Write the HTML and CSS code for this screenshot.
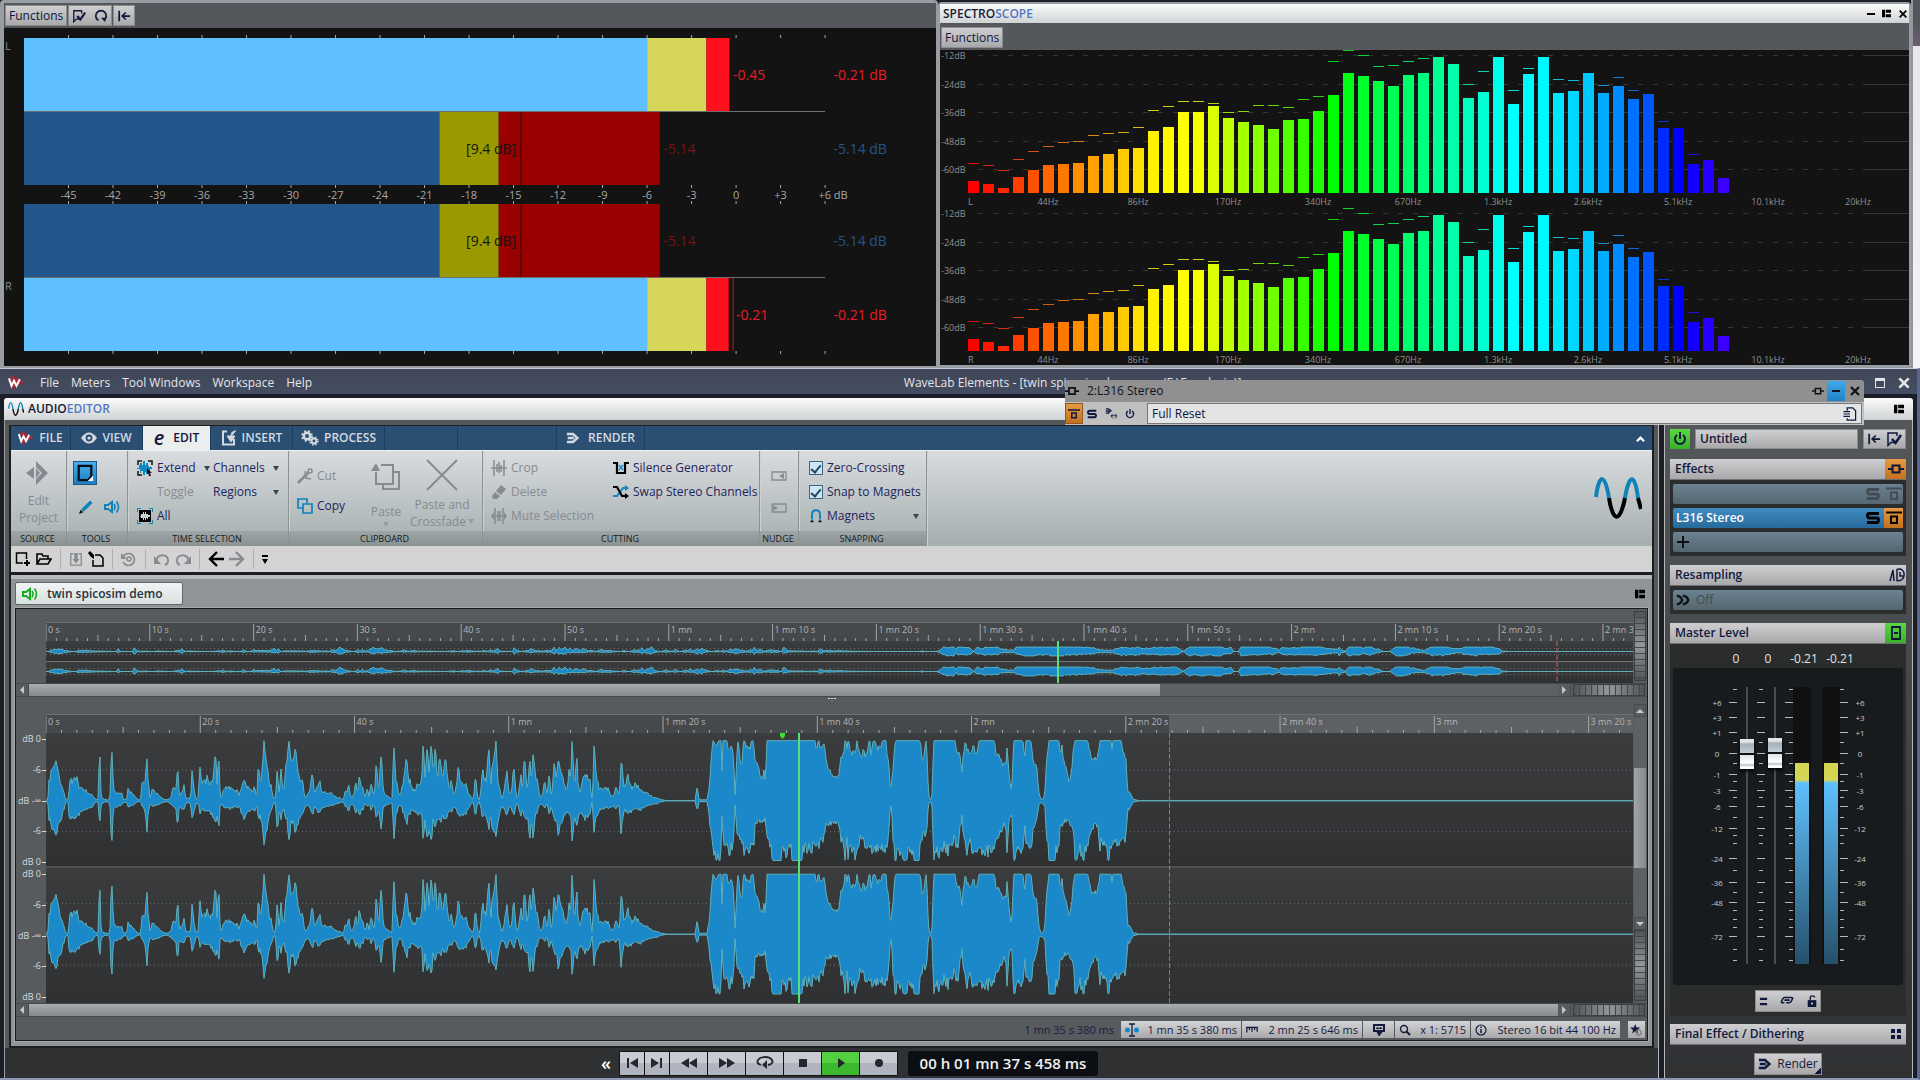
FILE: index.html
```html
<!DOCTYPE html>
<html lang="en">
<head>
    <meta charset="UTF-8">
    <meta name="viewport" content="width=device-width, initial-scale=1.0">
    <title>WaveLab Elements</title>
    <link rel="stylesheet" href="styles.css">
</head>
<body>
    <svg class="symbols" aria-hidden="true">
        <symbol id="check" viewBox="0 0 16 16"><path d="M8 11.500H5l-3 3V2h9v3" fill="none" stroke="currentColor" stroke-width="1.500"/><path d="M6 8l3.500 4L15 4" fill="none" stroke="currentColor" stroke-width="2.500"/></symbol>
        <symbol id="cycle" viewBox="0 0 16 16"><path d="M5 13A6 6 0 1 1 11 13" fill="none" stroke="currentColor" stroke-width="2"/><path d="M8 10h5v5z" fill="currentColor"/></symbol>
        <symbol id="back" viewBox="0 0 16 16"><path d="M2.500 2v12M15 8H6M10 4L6 8l4 4" fill="none" stroke="currentColor" stroke-width="2"/></symbol>
        <symbol id="layout" viewBox="0 0 12 10"><path d="M0 0h4v10H0zM5 0h7v4H5zM5 6h7v4H5z" fill="currentColor"/></symbol>
        <symbol id="cross" viewBox="0 0 12 12"><path d="M2 2l8 8M10 2l-8 8" stroke="currentColor" stroke-width="2.200"/></symbol>
        <symbol id="logo" viewBox="0 0 20 18"><path d="M3 0l16 8L4 18z" fill="#a8283c"/><path d="M1 4l3 9 3-6 3 6 4-8" fill="none" stroke="#fff" stroke-width="2.400"/></symbol>
        <symbol id="sine" viewBox="0 0 48 42"><path d="M2 20C5 -4 11 -4 15 21M31 21C35 -4 41 -4 44 21" fill="none" stroke="#0f82b8" stroke-width="4"/><path d="M15 21C19 46 26 46 31 21M44 21l3 11" fill="none" stroke="#000" stroke-width="4"/></symbol>
        <symbol id="eye" viewBox="0 0 16 12"><path d="M0 6Q8-5 16 6Q8 17 0 6z" fill="currentColor"/><circle cx="8" cy="6" r="3.400" fill="#2a4f73"/><circle cx="8" cy="6" r="1.600" fill="currentColor"/></symbol>
        <symbol id="insert" viewBox="0 0 16 16"><path d="M6 1.500H2v13h11V9" fill="none" stroke="currentColor" stroke-width="2"/><path d="M15 1c-4 0-5 2-5 6M6 6l4 6 4-6z" fill="currentColor" stroke="currentColor"/></symbol>
        <symbol id="gears" viewBox="0 0 18 16"><g fill="none" stroke="currentColor"><circle cx="6" cy="6" r="3.200" stroke-width="2.500"/><circle cx="6" cy="6" r="5" stroke-width="1.600" stroke-dasharray="2 2"/><circle cx="13" cy="11" r="2.400" stroke-width="2"/><circle cx="13" cy="11" r="4" stroke-width="1.400" stroke-dasharray="1.600 1.600"/></g></symbol>
        <symbol id="render" viewBox="0 0 16 14"><path d="M1 2.500h7l5 4.500-5 4.500H1M2 7h7" fill="none" stroke="currentColor" stroke-width="2.800"/></symbol>
        <symbol id="project" viewBox="0 0 28 28"><path d="M11 2l12 12-12 12V20l6-6-6-6zM9 8v12L1 14zM11 9l4 5-4 5z" fill="currentColor"/></symbol>
        <symbol id="range" viewBox="0 0 18 20"><path d="M2 2h14v12l-4 4H2z" fill="none" stroke="#071018" stroke-width="2.500"/><path d="M18 13v6h-6z" fill="#fff"/></symbol>
        <symbol id="pen" viewBox="0 0 18 16"><path d="M15 2L5 12" stroke="#0f82b8" stroke-width="4"/><path d="M1 16l2-5 3 3z" fill="#111"/></symbol>
        <symbol id="speaker" viewBox="0 0 16 14"><path d="M1 5h3l4-3v10L4 9H1z" fill="none" stroke="currentColor" stroke-width="2"/><path d="M10 4q2 3 0 6M12.500 1.500q4 5.500 0 11" fill="none" stroke="currentColor" stroke-width="1.600"/></symbol>
        <symbol id="extend" viewBox="0 0 16 16"><path d="M1 5V1h4M11 1h4v4M5 15H1v-4" fill="none" stroke="#111" stroke-width="1.500"/><path d="M0 8h2V5h1V3h2v2h1V1h2v4h1V3h2v3h1v1h3v2h-2v3h-1v-2h-1v4H9v-2H8v3H6v-4H4v2H3V9H0z" fill="#1188c4"/><path d="M10 8l5 5h-2l1 3h-2l-1-3-1 1z" fill="#111"/></symbol>
        <symbol id="all" viewBox="0 0 16 16"><path d="M0 4V0h4M12 0h4v4M16 12v4h-4M4 16H0v-4" fill="none" stroke="#0f82b8" stroke-width="2"/><path d="M2 2h12v12H2z" fill="#000"/><path d="M3 8h1V6h2V4h1v2h1V4h1v2h2v1h2v2h-2v2h-1v-1H9v2H8v-2H7v2H6v-2H4V9H3z" fill="#ccd2d4"/></symbol>
        <symbol id="cut" viewBox="0 0 16 16"><path d="M1 15L12 4" stroke="currentColor" stroke-width="2.500"/><circle cx="13" cy="3" r="2" fill="none" stroke="currentColor" stroke-width="1.500"/><path d="M8 3l1 7 5 1" fill="none" stroke="currentColor" stroke-width="1.500"/></symbol>
        <symbol id="copy" viewBox="0 0 16 16"><path d="M6 10H1V1h9v4M6 6h9v9H6z" fill="none" stroke="#0f82b8" stroke-width="1.700"/></symbol>
        <symbol id="paste" viewBox="0 0 30 30"><path d="M10 3h12v19H5V10M22 10h6v17H12v-5" fill="none" stroke="currentColor" stroke-width="2"/><path d="M5 1l4 8H0z" fill="currentColor"/></symbol>
        <symbol id="bigcross" viewBox="0 0 32 32"><path d="M1 1l30 30M31 1L1 31" stroke="currentColor" stroke-width="2"/></symbol>
        <symbol id="crop" viewBox="0 0 16 16"><path d="M3 0v16M13 0v16M0 8h16M6 4v8M8 2v11M10 5v7" stroke="currentColor" stroke-width="1.500"/></symbol>
        <symbol id="eraser" viewBox="0 0 16 16"><path d="M10 1l5 4-5 6-5-4zM4 8l5 4-3 3H2l-1-3z" fill="currentColor"/></symbol>
        <symbol id="mute" viewBox="0 0 16 16"><path d="M4 0v16M12 0v16M7 3v10M9 3v10M4 8h8" stroke="currentColor" stroke-width="1.500"/><path d="M0 8l3-4v8zM16 8l-3-4v8z" fill="currentColor"/></symbol>
        <symbol id="silence" viewBox="0 0 16 14"><path d="M0 2h4v10h8V2h4" fill="none" stroke="#000" stroke-width="2.200"/><path d="M6 4l4 5M10 4L6 9" stroke="#1188c4" stroke-width="1.300"/></symbol>
        <symbol id="swap" viewBox="0 0 16 14"><path d="M0 11h4l6-8h3" fill="none" stroke="#1188c4" stroke-width="2"/><path d="M12 0l4 3-4 3z" fill="#1188c4"/><path d="M0 2h4l5 9h4" fill="none" stroke="#000" stroke-width="2.200"/><path d="M12 8l4 3-4 3z" fill="#000"/></symbol>
        <symbol id="nudgel" viewBox="0 0 16 10"><path d="M1 1h14v8H1z" fill="none" stroke="currentColor" stroke-width="1.300"/><path d="M13 2v6L8 5z" fill="currentColor"/></symbol>
        <symbol id="nudger" viewBox="0 0 16 10"><path d="M1 1h14v8H1z" fill="none" stroke="currentColor" stroke-width="1.300"/><path d="M2 2v6l5-3z" fill="currentColor"/></symbol>
        <symbol id="magnet" viewBox="0 0 14 16"><path d="M2.500 12V6c0-6 9-6 9 0v6" fill="none" stroke="#0f82b8" stroke-width="2.200"/><path d="M1 13h3v2H1zM10 13h3v2h-3z" fill="#000"/></symbol>
        <symbol id="new" viewBox="0 0 16 16"><path d="M8 12H1.500V2h10v6" fill="none" stroke="currentColor" stroke-width="1.500"/><path d="M12 9v6M9 12h6" stroke="currentColor" stroke-width="2"/></symbol>
        <symbol id="open" viewBox="0 0 16 14"><path d="M1 12V2h5l1 2h5v3M1 12l3-5h11l-3 5z" fill="none" stroke="currentColor" stroke-width="1.600"/></symbol>
        <symbol id="save" viewBox="0 0 14 16"><path d="M4 2H1v13h12V2h-3" fill="none" stroke="currentColor" stroke-width="1.500"/><path d="M5 1h4v7h2l-4 5-4-5h2z" fill="currentColor"/></symbol>
        <symbol id="saveas" viewBox="0 0 16 16"><path d="M7 4h5l3 3v8H5V9" fill="none" stroke="currentColor" stroke-width="1.500"/><path d="M0 2l2-2 4 4v4L3 6z" fill="currentColor"/></symbol>
        <symbol id="revert" viewBox="0 0 16 16"><path d="M2 6a6 6 0 1 1 0 5" fill="none" stroke="currentColor" stroke-width="1.700"/><path d="M0 2v6h6z" fill="currentColor"/><circle cx="8" cy="8" r="2" fill="none" stroke="currentColor" stroke-width="1.500"/></symbol>
        <symbol id="undo" viewBox="0 0 16 14"><path d="M2 9C4 1 15 2 14 9q0 3-3 4" fill="none" stroke="currentColor" stroke-width="2"/><path d="M0 4v8h7z" fill="currentColor"/></symbol>
        <symbol id="arrow" viewBox="0 0 16 16"><path d="M16 8H2M9 1L2 8l7 7" fill="none" stroke="currentColor" stroke-width="2.400"/></symbol>
        <symbol id="bypass" viewBox="0 0 16 14"><path d="M0 1.500h16M5 5.500h6v6.500H5z" fill="none" stroke="currentColor" stroke-width="2"/></symbol>
        <symbol id="solo" viewBox="0 0 14 13"><path d="M13 2H3Q1.500 2 1.500 4T3 6.500h8q1.500 0 1.500 2T11 11H1" fill="none" stroke="currentColor" stroke-width="3"/></symbol>
        <symbol id="chain" viewBox="0 0 16 10"><path d="M0 5h4M12 5h4M4.500 1.500h7v7h-7z" fill="none" stroke="currentColor" stroke-width="2"/></symbol>
        <symbol id="power" viewBox="0 0 14 14"><path d="M4 3a5 5 0 1 0 6 0M7 0v7" fill="none" stroke="currentColor" stroke-width="1.900"/></symbol>
        <symbol id="route" viewBox="0 0 14 14"><path d="M1 1h3l3 2-3 3H1M1 3.500h4" fill="none" stroke="currentColor" stroke-width="1.500"/><path d="M7 9h7M9 7L7 9l2 3M12 7l2 2-2 3" fill="none" stroke="currentColor"/></symbol>
        <symbol id="sheet" viewBox="0 0 14 15"><path d="M4 4V1h6l3 3v10H4v-2M0 5h7M0 7.500h7M0 10h7" fill="none" stroke="currentColor" stroke-width="1.300"/></symbol>
        <symbol id="clock" viewBox="0 0 16 14"><path d="M1 13L4 2l1 11M8 1.500c10-3 9 13 0 11zM11 4v4h3" fill="none" stroke="currentColor" stroke-width="1.500"/></symbol>
        <symbol id="chevrons" viewBox="0 0 16 12"><path d="M1 1q5 1 6 5-1 4-6 5M8 1q5 1 6 5-1 4-6 5" fill="none" stroke="currentColor" stroke-width="2.600"/></symbol>
        <symbol id="fader" viewBox="0 0 10 14"><path d="M1 1h8v12H1zM3 7h4" fill="none" stroke="currentColor" stroke-width="1.800"/></symbol>
        <symbol id="equal" viewBox="0 0 8 10"><path d="M0 2h8M0 8h8" stroke="currentColor" stroke-width="2.500"/></symbol>
        <symbol id="link" viewBox="0 0 16 12"><path d="M5 8H3Q1 8 2 6l1-2q1-2 2-2h8q2 0 1 2l-1 2q-1 2-3 2H7M5 5h6" fill="none" stroke="currentColor" stroke-width="1.900"/></symbol>
        <symbol id="lock" viewBox="0 0 12 14"><path d="M1 6h10v8H1z" fill="currentColor"/><path d="M4 6V3q0-2 2.500-2T9 3" fill="none" stroke="currentColor" stroke-width="1.500"/><circle cx="6" cy="10" r="1.300" fill="#c4c4c6"/></symbol>
        <symbol id="grid" viewBox="0 0 10 10"><path d="M0 0h4v4H0zM6 0h4v4H6zM0 6h4v4H0zM6 6h4v4H6z" fill="currentColor"/></symbol>
        <symbol id="ibeam" viewBox="0 0 14 14"><circle cx="2.500" cy="7" r="2.500" fill="#1188c4"/><circle cx="11.500" cy="7" r="2.500" fill="#1188c4"/><path d="M4 1h6M4 13h6M7 1v12" stroke="currentColor" stroke-width="1.300"/></symbol>
        <symbol id="rule" viewBox="0 0 14 8"><path d="M0 1h14M1 1v6M4 1v3M7 1v5M10 1v3M13 1v5" stroke="currentColor" stroke-width="1.500"/></symbol>
        <symbol id="monitor" viewBox="0 0 12 12"><path d="M1 1h10v6H1z" fill="none" stroke="currentColor" stroke-width="2"/><path d="M3 5l1.500-2L6 5l1.500-2L9 5M4 8h5l-3 4z" fill="currentColor" stroke="currentColor" stroke-width=".8"/></symbol>
        <symbol id="lens" viewBox="0 0 12 12"><circle cx="5" cy="5" r="3.500" fill="none" stroke="currentColor" stroke-width="1.400"/><path d="M7.500 7.500L11 11" stroke="currentColor" stroke-width="2"/></symbol>
        <symbol id="info" viewBox="0 0 12 12"><circle cx="6" cy="6" r="5" fill="none" stroke="currentColor" stroke-width="1.200"/><path d="M6 2.500v1.500M6 5v4" stroke="currentColor" stroke-width="1.500"/></symbol>
        <symbol id="star" viewBox="0 0 14 14"><path d="M6 0l1.500 4H12L8.500 7l1 4L6 8.500 2.500 11l1-4L0 4h4.500z" fill="currentColor"/><circle cx="10" cy="10" r="3" fill="none" stroke="#777" stroke-width="1.300"/></symbol>
        <symbol id="toend" viewBox="0 0 12 12"><path d="M0 1l8 5-8 5zM9 1h2v10H9z" fill="currentColor"/></symbol>
        <symbol id="forward" viewBox="0 0 16 12"><path d="M0 1l8 5-8 5zM8 1l8 5-8 5z" fill="currentColor"/></symbol>
        <symbol id="loop" viewBox="0 0 18 14"><path d="M5 9Q1 8 1.500 5 3 1 9 1t7.500 4Q17 8 12 9" fill="none" stroke="currentColor" stroke-width="1.800"/><path d="M11 4v9L6 9z" fill="currentColor"/></symbol>
        <symbol id="play" viewBox="0 0 12 12"><path d="M3 1l7 5-7 5z" fill="currentColor"/></symbol>
    </svg>

    <div class="meters">
        <section class="level-window">
            <div class="meter-bar">
                <button class="metal">Functions</button>
                <button class="metal" aria-label="Settings"><svg class="i14"><use href="#check"/></svg><svg class="i14"><use href="#cycle"/></svg></button>
                <button class="metal" aria-label="Reset"><svg class="i14"><use href="#back"/></svg></button>
            </div>
            <svg class="level-plot" id="levels"></svg>
        </section>
        <section class="spectro-window">
            <header class="titlebar">
                <h2>SPECTRO<span>SCOPE</span></h2>
                <div class="title-tools">
                    <button aria-label="Minimize"><i class="dash"></i></button>
                    <button aria-label="Layout"><svg class="i9"><use href="#layout"/></svg></button>
                    <button aria-label="Close"><svg class="i10"><use href="#cross"/></svg></button>
                </div>
            </header>
            <div class="meter-bar tall"><button class="metal">Functions</button></div>
            <svg class="spectro-plot" data-channel="L"></svg>
            <svg class="spectro-plot" data-channel="R"></svg>
        </section>
        <div class="desktop-edge"></div>
    </div>

    <main class="app">
        <div class="menubar">
            <svg class="logo"><use href="#logo"/></svg>
            <nav>
                <a href="#file">File</a>
                <a href="#meters">Meters</a>
                <a href="#tools">Tool Windows</a>
                <a href="#workspace">Workspace</a>
                <a href="#help">Help</a>
            </nav>
            <h1>WaveLab Elements - [twin spicosim demo.wav (F:\F and win)]</h1>
            <button aria-label="Restore"><i class="box"></i></button>
            <button aria-label="Close"><svg class="i14"><use href="#cross"/></svg></button>
        </div>

        <div class="plugin">
            <div class="plugin-title">
                <svg class="i14"><use href="#chain"/></svg>
                <span>2:L316 Stereo</span>
                <button aria-label="Chain"><svg class="i12"><use href="#chain"/></svg></button>
                <button class="blue" aria-label="Minimize"><i class="dash"></i></button>
                <button aria-label="Close"><svg class="i12"><use href="#cross"/></svg></button>
            </div>
            <div class="plugin-tools">
                <button class="orange" aria-label="Bypass"><svg class="i12"><use href="#bypass"/></svg></button>
                <button aria-label="Solo"><svg class="i10"><use href="#solo"/></svg></button>
                <button aria-label="Routing"><svg class="i12"><use href="#route"/></svg></button>
                <button aria-label="Power"><svg class="i10"><use href="#power"/></svg></button>
                <div class="preset">
                    <input type="text" value="Full Reset" aria-label="Preset">
                    <svg class="i14"><use href="#sheet"/></svg>
                </div>
            </div>
        </div>

        <header class="titlebar app-title">
            <svg class="wave-logo"><use href="#sine"/></svg>
            <h2>AUDIO<span>EDITOR</span></h2>
            <div class="title-tools"><button aria-label="Layout"><svg class="i10"><use href="#layout"/></svg></button></div>
        </header>

        <div class="workspace">
            <div class="editor">
                <div class="frame">
                    <div class="tabs">
                        <button class="w-file"><svg class="i16"><use href="#logo"/></svg>FILE</button>
                        <button class="w-view"><svg class="i16"><use href="#eye"/></svg>VIEW</button>
                        <button class="w-edit active"><em>e</em>EDIT</button>
                        <button class="w-insert"><svg class="i16"><use href="#insert"/></svg>INSERT</button>
                        <button class="w-process"><svg class="i18"><use href="#gears"/></svg>PROCESS</button>
                        <span class="w-blank"></span>
                        <span class="w-blank wide"></span>
                        <button class="w-render"><svg class="i14"><use href="#render"/></svg>RENDER</button>
                        <button class="fold" aria-label="Fold ribbon"><svg class="i9" viewBox="0 0 10 8"><path d="M1 7l4-4 4 4" fill="none" stroke="#fff" stroke-width="2.500"/></svg></button>
                    </div>
                    <div class="ribbon">
                        <section class="g-source">
                            <div class="group">
                                <button class="big" disabled><svg class="i28"><use href="#project"/></svg>Edit<br>Project</button>
                            </div>
                            <h3>SOURCE</h3>
                        </section>
                        <section class="g-tools">
                            <div class="group tools">
                                <button class="selected" aria-label="Range"><svg class="i18"><use href="#range"/></svg></button>
                                <button aria-label="Pen"><svg class="i16"><use href="#pen"/></svg></button>
                                <button class="cyan" aria-label="Play tool"><svg class="i16"><use href="#speaker"/></svg></button>
                            </div>
                            <h3>TOOLS</h3>
                        </section>
                        <section class="g-time">
                            <div class="group time">
                                <button class="item"><svg class="i16"><use href="#extend"/></svg>Extend<i class="drop"></i></button>
                                <button class="item">Channels<i class="drop"></i></button>
                                <button class="item inset" disabled>Toggle</button>
                                <button class="item">Regions<i class="drop"></i></button>
                                <button class="item"><svg class="i16"><use href="#all"/></svg>All</button>
                            </div>
                            <h3>TIME SELECTION</h3>
                        </section>
                        <section class="g-clip">
                            <div class="group clip">
                                <div class="pair">
                                    <button class="item" disabled><svg class="i16"><use href="#cut"/></svg>Cut</button>
                                    <button class="item"><svg class="i16"><use href="#copy"/></svg>Copy</button>
                                </div>
                                <button class="big low" disabled><svg class="i30"><use href="#paste"/></svg>Paste<i class="drop"></i></button>
                                <button class="big" disabled><svg class="i32"><use href="#bigcross"/></svg>Paste and<span>Crossfade<i class="drop"></i></span></button>
                            </div>
                            <h3>CLIPBOARD</h3>
                        </section>
                        <section class="g-cut">
                            <div class="group cutting">
                                <button class="item" disabled><svg class="i16"><use href="#crop"/></svg>Crop</button>
                                <button class="item"><svg class="i16"><use href="#silence"/></svg>Silence Generator</button>
                                <button class="item" disabled><svg class="i16"><use href="#eraser"/></svg>Delete</button>
                                <button class="item"><svg class="i16"><use href="#swap"/></svg>Swap Stereo Channels</button>
                                <button class="item" disabled><svg class="i16"><use href="#mute"/></svg>Mute Selection</button>
                            </div>
                            <h3>CUTTING</h3>
                        </section>
                        <section class="g-nudge">
                            <div class="group nudge">
                                <button aria-label="Nudge left" disabled><svg class="i16"><use href="#nudgel"/></svg></button>
                                <button aria-label="Nudge right" disabled><svg class="i16"><use href="#nudger"/></svg></button>
                            </div>
                            <h3>NUDGE</h3>
                        </section>
                        <section class="g-snap">
                            <div class="group snap">
                                <label class="item"><input type="checkbox" checked>Zero-Crossing</label>
                                <label class="item"><input type="checkbox" checked>Snap to Magnets</label>
                                <button class="item"><svg class="i14"><use href="#magnet"/></svg>Magnets<i class="drop"></i></button>
                            </div>
                            <h3>SNAPPING</h3>
                        </section>
                        <svg class="brand"><use href="#sine"/></svg>
                    </div>
                    <div class="quickbar">
                        <button aria-label="New"><svg class="i16"><use href="#new"/></svg></button>
                        <button aria-label="Open"><svg class="i16"><use href="#open"/></svg></button>
                        <hr>
                        <button aria-label="Save" disabled><svg class="i14"><use href="#save"/></svg></button>
                        <button aria-label="Save as"><svg class="i16"><use href="#saveas"/></svg></button>
                        <hr>
                        <button aria-label="Revert" disabled><svg class="i16"><use href="#revert"/></svg></button>
                        <hr>
                        <button aria-label="Undo" disabled><svg class="i16"><use href="#undo"/></svg></button>
                        <button class="flip" aria-label="Redo" disabled><svg class="i16"><use href="#undo"/></svg></button>
                        <hr>
                        <button aria-label="Previous"><svg class="i16"><use href="#arrow"/></svg></button>
                        <button class="flip" aria-label="Next" disabled><svg class="i16"><use href="#arrow"/></svg></button>
                        <hr>
                        <button class="more" aria-label="More"><i class="drop"></i></button>
                    </div>
                    <div class="document">
                        <div class="doc-tabs">
                            <button class="doc-tab"><svg class="i16"><use href="#speaker"/></svg>twin spicosim demo</button>
                            <button class="doc-layout" aria-label="Tab layout"><svg class="i10"><use href="#layout"/></svg></button>
                        </div>
                        <div class="montage">
                            <div class="view overview">
                                <svg class="ruler" id="overview-ruler"></svg>
                                <svg class="wave" id="overview-wave" preserveAspectRatio="none"></svg>
                                <div class="side"><i class="wheel"></i></div>
                            </div>
                            <div class="scroll-row">
                                <button aria-label="Scroll left"><i class="tri left"></i></button>
                                <div class="track"><i class="thumb part"></i></div>
                                <button aria-label="Scroll right"><i class="tri right"></i></button>
                                <i class="wheel"></i>
                            </div>
                            <div class="splitter"></div>
                            <div class="view detail">
                                <svg class="ruler" id="detail-ruler"></svg>
                                <div class="scale">
                                    <div><span>dB 0</span><span>-6</span><span>dB -∞</span><span>-6</span><span>dB 0</span></div>
                                    <div><span>dB 0</span><span>-6</span><span>dB -∞</span><span>-6</span><span>dB 0</span></div>
                                </div>
                                <svg class="wave" id="detail-wave" preserveAspectRatio="none"></svg>
                                <div class="side">
                                    <button aria-label="Scroll up"><i class="tri up"></i></button>
                                    <div class="track"><i class="thumb"></i></div>
                                    <button aria-label="Scroll down"><i class="tri down"></i></button>
                                    <i class="wheel"></i>
                                </div>
                            </div>
                            <div class="scroll-row">
                                <button aria-label="Scroll left"><i class="tri left"></i></button>
                                <div class="track"><i class="thumb"></i></div>
                                <button aria-label="Scroll right"><i class="tri right"></i></button>
                                <i class="wheel"></i>
                            </div>
                            <div class="status">
                                <span class="plain">1 mn 35 s 380 ms</span>
                                <button class="cell s120"><svg class="i14"><use href="#ibeam"/></svg>1 mn 35 s 380 ms</button>
                                <button class="cell s120"><svg class="i12"><use href="#rule"/></svg>2 mn 25 s 646 ms</button>
                                <button class="cell s31" aria-label="Monitor"><svg class="i12"><use href="#monitor"/></svg></button>
                                <button class="cell s75"><svg class="i12"><use href="#lens"/></svg>x 1: 5715</button>
                                <button class="cell s149"><svg class="i12"><use href="#info"/></svg>Stereo 16 bit 44 100 Hz</button>
                                <button class="cell s17" aria-label="Favourite"><svg class="i12"><use href="#star"/></svg></button>
                            </div>
                        </div>
                    </div>
                </div>
            </div>

            <div class="transport">
                <span class="collapse">«</span>
                <div class="keys">
                    <button class="small flip" aria-label="To start"><svg class="i12"><use href="#toend"/></svg></button>
                    <button class="small" aria-label="To end"><svg class="i12"><use href="#toend"/></svg></button>
                    <button class="flip" aria-label="Rewind"><svg class="i16"><use href="#forward"/></svg></button>
                    <button aria-label="Fast forward"><svg class="i16"><use href="#forward"/></svg></button>
                    <button aria-label="Loop"><svg class="i18"><use href="#loop"/></svg></button>
                    <button aria-label="Stop"><i class="stop"></i></button>
                    <button class="playing" aria-label="Play"><svg class="i12"><use href="#play"/></svg></button>
                    <button aria-label="Record"><i class="record"></i></button>
                </div>
                <output class="clock">00 h 01 mn 37 s 458 ms</output>
            </div>

            <aside class="master">
                <div class="preset-row">
                    <button class="green" aria-label="Power"><svg class="i14"><use href="#power"/></svg></button>
                    <button class="metal name">Untitled</button>
                    <button class="metal pair-icons" aria-label="Options"><svg class="i14"><use href="#back"/></svg><svg class="i16"><use href="#check"/></svg></button>
                </div>
                <section>
                    <h3>Effects<button class="orange" aria-label="Chain"><svg class="i16"><use href="#chain"/></svg></button></h3>
                    <div class="slots">
                        <div class="slot off"><svg class="i14"><use href="#solo"/></svg><span><svg class="i16"><use href="#bypass"/></svg></span></div>
                        <div class="slot on"><b>L316 Stereo</b><svg class="i14"><use href="#solo"/></svg><span class="orange"><svg class="i16"><use href="#bypass"/></svg></span></div>
                        <button class="slot add" aria-label="Add effect"><svg class="i14" viewBox="0 0 14 14"><path d="M7 1v12M1 7h12" stroke="#0b1014" stroke-width="2"/></svg></button>
                    </div>
                </section>
                <section>
                    <h3>Resampling<svg class="i16"><use href="#clock"/></svg></h3>
                    <div class="slots">
                        <button class="slot resample"><svg class="i14"><use href="#chevrons"/></svg>Off</button>
                    </div>
                </section>
                <section class="level-section">
                    <h3>Master Level<button class="green" aria-label="Faders"><svg class="i14"><use href="#fader"/></svg></button></h3>
                    <div class="console">
                        <div class="readout"><span>0</span><span>0</span><span>-0.21</span><span>-0.21</span></div>
                        <div class="mixer">
                            <svg class="marks"></svg>
                            <svg class="ticks" data-side="right"></svg>
                            <input type="range" min="0" max="247" value="195" aria-label="Left gain">
                            <svg class="ticks" data-side="center"></svg>
                            <input type="range" min="0" max="247" value="196" aria-label="Right gain">
                            <svg class="ticks" data-side="right"></svg>
                            <div class="peak"><i></i></div>
                            <div class="gap"></div>
                            <div class="peak"><i></i></div>
                            <svg class="ticks" data-side="left"></svg>
                            <svg class="marks"></svg>
                        </div>
                        <button class="metal options" aria-label="Fader options"><svg class="i9"><use href="#equal"/></svg><svg class="i14"><use href="#link"/></svg><svg class="i12"><use href="#lock"/></svg></button>
                    </div>
                </section>
                <h3 class="final">Final Effect / Dithering<svg class="i10"><use href="#grid"/></svg></h3>
                <button class="metal render"><svg class="i14"><use href="#render"/></svg>Render</button>
            </aside>
        </div>
    </main>
    <script src="script.js"></script>
</body>
</html>
```

FILE: styles.css
```css
* {
    box-sizing: border-box;
}
body {
    margin: 0;
    min-height: 100vh;
    display: flex;
    flex-direction: column;
    background-color: #1b1e26;
    font-family: "Open Sans", "Noto Sans", sans-serif;
    font-size: 12px;
    line-height: 16px;
    color: #10183c;
}
button, input {
    font: inherit;
    color: inherit;
    padding: 0;
    margin: 0;
    border: none;
    background: none;
}
button {
    display: flex;
    align-items: center;
    justify-content: center;
    white-space: nowrap;
}
h1, h2, h3 {
    margin: 0;
    font-size: 12px;
    font-weight: 400;
}
svg {
    display: block;
    flex: none;
}
svg text {
    dominant-baseline: central;
}
.symbols {
    position: absolute;
    width: 0;
    height: 0;
}
.i9 { width: 9px; height: 9px; }
.i10 { width: 10px; height: 10px; }
.i12 { width: 12px; height: 12px; }
.i14 { width: 14px; height: 14px; }
.i16 { width: 16px; height: 16px; }
.i18 { width: 18px; height: 18px; }
.i28 { width: 28px; height: 28px; }
.i30 { width: 30px; height: 30px; }
.i32 { width: 32px; height: 32px; }
.flip svg {
    transform: scaleX(-1);
}
.metal {
    background: linear-gradient(#cfcfd1, #a9a9ab);
    border: 1px solid #8a8c8e;
}
.orange {
    background: linear-gradient(#e69a45, #c4701c);
}
.green {
    background: linear-gradient(#5bd844, #38b02a);
}

/* meter windows */
.meters {
    display: grid;
    grid-template-columns: 938fr 973fr 9px;
    height: 368px;
}
.level-window {
    display: flex;
    flex-direction: column;
    background-color: #131313;
    border: 3px solid #989ca3;
    border-width: 3px 2px 2px 4px;
    border-radius: 4px 4px 0 0;
}
.meter-bar {
    display: flex;
    gap: 1px;
    height: 25px;
    padding: 2px 1px;
    background-color: #54575b;
}
.meter-bar.tall {
    height: 27px;
    padding: 4px 1px 2px;
}
.meter-bar .metal {
    padding: 0 3px;
    gap: 8px;
}
.level-plot {
    width: 100%;
    flex: 1;
    font-size: 14px;
}
.spectro-window {
    display: flex;
    flex-direction: column;
    margin-top: 2px;
    background-color: #131313;
    border: 2px solid #989ca3;
    border-width: 2px 2px 3px 2px;
    border-radius: 4px 4px 0 0;
}
.titlebar {
    display: flex;
    align-items: center;
    height: 19px;
    padding: 0 1px 0 3px;
    background: linear-gradient(#fbfbfb, #cfd3d4);
}
.titlebar h2 {
    font-weight: 600;
    color: #161b33;
}
.titlebar h2 span {
    color: #5478c0;
}
.title-tools {
    display: flex;
    align-items: center;
    gap: 7px;
    margin-left: auto;
    color: #000;
}
.dash {
    width: 8px;
    height: 2px;
    background-color: currentColor;
}
.spectro-plot {
    width: 100%;
    flex: 1;
    min-height: 0;
    font-size: 9px;
}
.desktop-edge {
    background: linear-gradient(90deg, #9496a0 2px, transparent 2px), linear-gradient(#55565c 20px, #6a5f72 46px, #e8e8ea 46px, #f4f4f4);
}

/* application window */
.app {
    position: relative;
    flex: 1;
    display: flex;
    flex-direction: column;
    border-top: 1px solid #c4cbe0;
    border-bottom: 2px solid #8d96b4;
    border-right: 3px solid #5a6690;
    padding: 0 4px;
}
.menubar {
    display: flex;
    align-items: center;
    height: 25px;
    margin: 0 -4px 4px;
    padding: 2px 6px 0 8px;
    background: linear-gradient(#404656, #444d62);
    color: #e6e6e8;
}
.logo {
    width: 17px;
    height: 15px;
    margin-right: 15px;
}
.menubar nav {
    display: flex;
    gap: 12px;
}
.menubar a {
    color: inherit;
    text-decoration: none;
}
.menubar h1 {
    flex: 1;
    padding-right: 30px;
    text-align: center;
}
.menubar button {
    margin-left: 12px;
}
.box {
    width: 10px;
    height: 10px;
    border: 1px solid #e6e6e8;
    border-top-width: 3px;
}
.plugin {
    position: absolute;
    top: 11px;
    right: 53px;
    width: 799px;
    background-color: #c0c0c1;
    border-radius: 4px 4px 0 0;
    overflow: hidden;
}
.plugin-title {
    display: flex;
    align-items: center;
    height: 22px;
    padding-right: 3px;
    background-color: #909090;
    color: #10121a;
}
.plugin-title span {
    flex: 1;
    padding-left: 8px;
}
.plugin-title .blue {
    width: 18px;
    height: 20px;
    margin: 0 4px 0 3px;
    background: linear-gradient(#3eaaea, #1f82c8);
}
.plugin-tools {
    display: flex;
    align-items: center;
    height: 23px;
    gap: 8px;
}
.plugin-tools .orange {
    width: 18px;
    height: 21px;
    border: 1px solid #8c5a24;
    margin-right: -4px;
}
.preset {
    flex: 1;
    display: flex;
    align-items: center;
    height: 21px;
    padding: 0 4px;
    margin: 0 2px 0 4px;
    background-color: #e2e4e6;
    border: 1px solid #777;
}
.preset input {
    flex: 1;
}
.app-title {
    height: 22px;
    padding: 0 9px 0 4px;
    border-radius: 3px 3px 0 0;
}
.wave-logo {
    width: 16px;
    height: 14px;
    margin-right: 4px;
}
.workspace {
    flex: 1;
    display: grid;
    grid-template-columns: 1fr 255px;
    grid-template-rows: 1fr auto;
    background-color: #54585b;
    min-height: 0;
}
.editor {
    display: flex;
    padding: 5px 4px 0 4px;
    border-left: 1px solid #9a9c9e;
}
.frame {
    flex: 1;
    display: flex;
    flex-direction: column;
    border: 2px solid #1b1e22;
    border-top-width: 1px;
    min-width: 0;
}

/* ribbon */
.tabs {
    display: flex;
    height: 24px;
    background-color: #2a4f73;
    color: #d4dae0;
    font-weight: 600;
}
.tabs button, .tabs span {
    gap: 5px;
    border-right: 1px solid #1d3d5f;
}
.tabs .active {
    background-color: #eceded;
    color: #10183c;
    gap: 9px;
}
.tabs em {
    font-size: 20px;
}
.w-file { width: 60px; }
.w-view { width: 72px; }
.w-edit { width: 68px; }
.w-insert { width: 82px; }
.w-process { width: 92px; }
.w-blank { width: 73px; }
.w-blank.wide { width: 99px; }
.w-render { width: 88px; }
.tabs .w-render {
    gap: 8px;
}
.tabs .fold {
    margin-left: auto;
    padding-right: 7px;
    border: none;
}
.ribbon {
    display: flex;
    height: 96px;
    background: linear-gradient(#d9dcde, #a5aeb0);
    border-top: 1px solid #f0f0f0;
    color: #1c245c;
}
.ribbon section {
    display: flex;
    flex-direction: column;
    border-right: 1px solid #8c9395;
    box-shadow: 1px 0 #ced2d3;
}
.ribbon h3 {
    height: 15px;
    padding-right: 2px;
    background: linear-gradient(#9ea5a7, #8b9293);
    color: #15191c;
    font-size: 9px;
    line-height: 15px;
    text-align: center;
}
.ribbon :disabled, .quickbar :disabled {
    color: #868b92;
}
.g-source { width: 56px; }
.g-tools { width: 61px; }
.g-time { width: 161px; }
.g-clip { width: 194px; }
.g-cut { width: 277px; }
.g-nudge { width: 39px; }
.g-snap { width: 128px; }
.group {
    flex: 1;
    padding-top: 5px;
}
.big {
    flex-direction: column;
    width: 100%;
    line-height: 17px;
}
.big svg {
    margin: 3px 0 5px;
}
.tools {
    display: grid;
    grid-template-columns: 26px 26px;
    grid-template-rows: 36px 32px;
    justify-content: start;
    align-items: center;
    padding-left: 6px;
    padding-top: 4px;
}
.tools .selected {
    width: 24px;
    height: 24px;
    background: linear-gradient(#48aee8, #1c7fc0);
    border: 1px solid #1d5a88;
    grid-column: 1 / 3;
}
.cyan {
    color: #0f82b8;
}
.item {
    display: flex;
    justify-content: flex-start;
    align-items: center;
    gap: 4px;
    height: 24px;
    white-space: nowrap;
}
.drop {
    border: 3px solid transparent;
    border-top: 5px solid #3c444c;
    border-bottom: none;
}
.item .drop {
    margin-left: auto;
}
:disabled .drop {
    border-top-color: #969c9f;
}
.time {
    display: grid;
    grid-template-columns: 73px 66px;
    column-gap: 3px;
    align-content: start;
    padding-left: 9px;
}
.inset {
    padding-left: 20px;
}
.clip {
    display: grid;
    grid-template-columns: 64px 50px 62px;
    padding-left: 8px;
}
.clip .big {
    justify-content: flex-start;
}
.clip .low svg {
    margin: 6px 0 11px;
}
.low .drop {
    margin-top: 2px;
}
.big span {
    display: flex;
    align-items: center;
    gap: 2px;
}
.pair {
    display: flex;
    flex-direction: column;
    gap: 6px;
    padding-top: 8px;
}
.cutting {
    display: grid;
    grid-template-columns: 120px 145px;
    column-gap: 2px;
    align-content: start;
    padding-left: 8px;
}
.nudge {
    display: flex;
    flex-direction: column;
    align-items: center;
    gap: 16px;
    padding-top: 17px;
}
.snap {
    padding: 5px 7px 0 10px;
}
.snap button {
    width: 100%;
}
.snap input {
    appearance: none;
    flex: none;
    width: 14px;
    height: 14px;
    border: 1px solid #3a6880;
    background-color: #cfe6f2;
    display: grid;
    place-items: center;
}
.snap input:checked::before {
    content: "";
    width: 4px;
    height: 8px;
    border: solid #1e4a66;
    border-width: 0 2px 2px 0;
    transform: rotate(40deg);
}
.brand {
    width: 48px;
    height: 42px;
    margin: 26px 10px 0 auto;
}
.quickbar {
    display: flex;
    align-items: center;
    gap: 5px;
    height: 26px;
    padding-left: 4px;
    background-color: #d3d3d3;
    color: #000;
}
.quickbar hr {
    height: 20px;
    margin: 0 3px;
    border: none;
    border-left: 1px solid #b0b0b0;
}
.more {
    padding-top: 2px;
    border-top: 2px solid #000;
}
.more .drop {
    border-top-color: #000;
}

/* document */
.document {
    flex: 1;
    display: flex;
    flex-direction: column;
    padding: 4px 4px 5px;
    border-top: 3px solid #1b1e22;
    background: linear-gradient(#b7b9bb 4px, #919497 4px);
}
.doc-tabs {
    display: flex;
    justify-content: space-between;
    height: 29px;
    padding: 3px 3px 3px 0;
}
.doc-tab {
    width: 168px;
    justify-content: flex-start;
    gap: 9px;
    padding-left: 6px;
    background: linear-gradient(#f0f4f4, #d8e0e0);
    border: 1px solid #62676a;
    border-radius: 2px;
    color: #283038;
    font-weight: 600;
}
.doc-tab svg {
    color: #16ac20;
}
.doc-layout {
    color: #000;
}
.montage {
    flex: 1;
    display: flex;
    flex-direction: column;
    border: 1px solid #17191b;
    background-color: #575b5e;
    box-shadow: 0 0 0 1px #a6a8aa;
}
.view {
    display: grid;
    grid-template-columns: 30px minmax(0, 1fr) 14px;
}
.overview {
    grid-template-rows: 13px 19px 42px;
}
.detail {
    flex: 1;
    grid-template-rows: 12px 19px minmax(0, 1fr);
}
.ruler {
    grid-area: 2 / 2;
    width: 100%;
    height: 19px;
    border-top: 1px solid #6c7173;
    background-color: #46494b;
    font-size: 9px;
}
.wave {
    grid-area: 3 / 2;
    width: 100%;
    height: 100%;
    min-height: 0;
}
.detail .wave {
    contain: size;
}
.side {
    grid-area: 1 / 3 / 4 / 3;
    display: flex;
    flex-direction: column;
    padding: 2px 1px;
}
.scale {
    grid-area: 3 / 1;
    display: grid;
    grid-template-rows: 1fr 1fr;
    color: #d8dadb;
    font-size: 9px;
    line-height: 12px;
}
.scale div {
    display: flex;
    flex-direction: column;
    justify-content: space-between;
    text-align: right;
}
.scale span::after {
    content: "";
    display: inline-block;
    width: 4px;
    margin-left: 1px;
    border-top: 1px solid #d8dadb;
    vertical-align: middle;
}
.wheel {
    width: 72px;
    border: 1px solid #3c3f41;
    background: repeating-linear-gradient(90deg, transparent 0 5px, #45484a 5px 6px), linear-gradient(90deg, #505356, #94979a, #505356);
}
.side .wheel {
    width: 12px;
    height: 71px;
    background: repeating-linear-gradient(transparent 0 5px, #45484a 5px 6px), linear-gradient(#505356, #94979a, #505356);
}
.side .track {
    flex: 1;
    padding-top: 51px;
}
.side .thumb {
    width: 12px;
    height: 100px;
    background: linear-gradient(90deg, #a0a4a6, #84898b);
}
.side button {
    height: 13px;
    border: 1px solid #474b4d;
}
.scroll-row {
    display: flex;
    height: 14px;
    padding-right: 2px;
    border: solid #474a4c;
    border-width: 1px 0;
}
.scroll-row button {
    width: 13px;
    border-right: 1px solid #474b4d;
}
.track {
    flex: 1;
    background-color: #5c6164;
}
.scroll-row .wheel {
    margin-left: 2px;
}
.thumb {
    display: block;
    height: 100%;
    background: linear-gradient(#a8acae, #858a8c);
}
.part {
    width: 74%;
}
.tri {
    border: 4px solid transparent;
}
.left { border-left: none; border-right-color: #c4c8ca; }
.right { border-right: none; border-left-color: #c4c8ca; }
.up { border-top: none; border-bottom-color: #c4c8ca; }
.down { border-bottom: none; border-top-color: #c4c8ca; }
.splitter {
    align-self: center;
    width: 8px;
    height: 5px;
    background: repeating-linear-gradient(90deg, #dfe1e2 0 2px, transparent 2px 3px) no-repeat 0 1px / 100% 1px;
}
.status {
    display: flex;
    align-items: center;
    justify-content: flex-end;
    gap: 1px;
    height: 23px;
    padding: 2px 2px 0 0;
    color: #141c3e;
    font-size: 11px;
}
.plain {
    padding-right: 6px;
}
.cell {
    justify-content: space-between;
    height: 17px;
    padding: 0 4px;
    background: linear-gradient(#d4d4d6, #a9a9ab);
}
.s120 { width: 120px; }
.s31 { width: 31px; justify-content: center; }
.s75 { width: 75px; }
.s149 { width: 149px; }
.s17 { width: 17px; margin-left: 7px; padding: 0 2px; }

/* transport */
.transport {
    grid-area: 2 / 1;
    display: flex;
    justify-content: center;
    align-items: center;
    height: 30px;
    background-color: #303133;
    border-left: 1px solid #9a9c9e;
    padding-left: 36px;
}
.collapse {
    margin-right: 8px;
    color: #fff;
    font-size: 18px;
    font-weight: 600;
}
.keys {
    display: flex;
    gap: 1px;
    padding: 1px;
    background-color: #101214;
    border-radius: 2px;
}
.keys button {
    width: 37px;
    height: 23px;
    background: linear-gradient(#c8cbd4 50%, #b0b4be 50%);
    color: #24272c;
}
.keys .small {
    width: 24px;
}
.keys .playing {
    background: linear-gradient(#52d040 50%, #3cb82e 50%);
}
.stop, .record {
    width: 8px;
    height: 8px;
    background-color: currentColor;
}
.record {
    border-radius: 50%;
}
.clock {
    width: 190px;
    height: 25px;
    margin-left: 10px;
    border-radius: 3px;
    background-color: #0b0f13;
    color: #eef0f0;
    font-size: 15px;
    font-weight: 600;
    line-height: 25px;
    text-align: center;
}

/* master section */
.master {
    grid-area: 1 / 2 / 3 / 3;
    display: flex;
    flex-direction: column;
    gap: 9px;
    padding: 9px 6px 3px 5px;
    border: solid #b5b7b9;
    border-width: 0 1px;
    box-shadow: -5px 0 #1b1e26, -6px 0 #b5b7b9;
    background: linear-gradient(#54585b, #2f3133);
    margin-left: 6px;
}
.preset-row {
    display: flex;
    gap: 5px;
    height: 20px;
    margin-bottom: 1px;
}
.preset-row .green {
    width: 20px;
}
.preset-row .name {
    flex: 1;
    justify-content: flex-start;
    padding-left: 4px;
    font-weight: 600;
}
.pair-icons {
    width: 43px;
    gap: 5px;
}
.master h3 {
    display: flex;
    align-items: center;
    justify-content: space-between;
    height: 21px;
    padding: 0 1px 0 5px;
    background: linear-gradient(#cfcfd1, #a9a9ab);
    border-bottom: 1px solid #6e7072;
    font-weight: 600;
}
.master h3 button {
    width: 21px;
    height: 20px;
    margin-right: -1px;
}
.master .final {
    margin-top: -1px;
    padding-right: 5px;
}
.slots {
    display: flex;
    flex-direction: column;
    gap: 4px;
    padding: 4px 3px;
    background-color: #2b2c2d;
}
.slot {
    display: flex;
    align-items: center;
    justify-content: flex-end;
    gap: 4px;
    width: 100%;
    height: 20px;
    padding-left: 3px;
    border-radius: 2px;
    background: linear-gradient(#6c8290, #54666f);
    color: #000;
}
.slot span {
    width: 19px;
    height: 20px;
    display: grid;
    place-items: center;
}
.slot b {
    flex: 1;
    color: #fff;
    font-weight: 600;
}
.off {
    color: #414d54;
}
.on {
    background: linear-gradient(#3f8cc0, #276a9c);
}
.add, .resample {
    justify-content: flex-start;
}
.resample {
    gap: 6px;
    color: #3f4a50;
}
.resample svg {
    color: #0b1014;
}
.level-section {
    flex: 1;
    display: flex;
    flex-direction: column;
}
.console {
    flex: 1;
    display: flex;
    flex-direction: column;
    align-items: center;
    padding: 0 3px 4px;
    background-color: #2b2c2c;
}
.readout {
    display: grid;
    grid-template-columns: 32px 32px 40px 32px;
    height: 24px;
    align-items: center;
    padding-top: 6px;
    color: #e2e4e6;
    text-align: center;
}
.mixer {
    display: flex;
    justify-content: center;
    align-self: stretch;
    flex: 1;
    padding: 19px 0;
    margin-bottom: 5px;
    background-color: #181b1e;
    border-radius: 3px;
}
.marks {
    width: 24px;
    height: 277px;
    font-size: 8px;
    fill: #c8cacc;
    text-anchor: middle;
}
.ticks {
    width: 8px;
    height: 277px;
    stroke: #b4b8ba;
}
.mixer input {
    appearance: none;
    writing-mode: vertical-lr;
    direction: rtl;
    width: 20px;
    height: 277px;
    background: linear-gradient(#4a4d50, #4a4d50) no-repeat center / 2px 100%;
}
.mixer input::-webkit-slider-thumb {
    appearance: none;
    width: 14px;
    height: 30px;
    background: linear-gradient(#dfe6ec 3px, #a4b0ba 5px, #c4ccd4 14px, #0d1216 14px, #0d1216 16px, #dde3e8 16px, #fff 24px, #b9c2c9 26px, #fff 28px);
    box-shadow: 0 2px 3px #000;
}
.peak {
    width: 18px;
    height: 277px;
    padding: 76px 2px 0;
    background-color: #111;
}
.peak i {
    display: block;
    height: 201px;
    background: linear-gradient(#d5d554 17px, #5ec0fe 20px, #26506b);
}
.gap {
    width: 11px;
}
.options {
    width: 66px;
    height: 22px;
    gap: 12px;
}
.render {
    align-self: center;
    width: 68px;
    height: 22px;
    gap: 5px;
    margin-top: -1px;
    background: linear-gradient(135deg, transparent 93%, #10183c 93%), linear-gradient(#cfcfd1, #a9a9ab);
}
```

FILE: script.js
```js
var NS = 'http://www.w3.org/2000/svg';

function add(parent, tag, attrs, text) {
    var node = document.createElementNS(NS, tag);
    for (var key in attrs) {
        node.setAttribute(key, attrs[key]);
    }
    if (text) {
        node.textContent = text;
    }
    parent.appendChild(node);
    return node;
}

function interpolate(points, x, column, curve) {
    for (var i = 1; i < points.length; i++) {
        var a = points[i - 1], b = points[i];
        if (x <= b[0]) {
            var f = (x - a[0]) / (b[0] - a[0]);
            var from = a[column], to = b[column];
            if (curve && to > from) {
                return from + (to - from) * Math.pow(f, curve);
            }
            if (curve) {
                return to + (from - to) * Math.pow(1 - f, curve);
            }
            return from + (to - from) * f;
        }
    }
    return 0;
}

// Level meter, horizontal scale in dB
function drawLevels() {
    var svg = document.getElementById('levels');
    function pos(db) {
        return (20 + (db + 48) * 14.835) / 9.32 + '%';
    }
    function bar(y, from, to, color) {
        add(svg, 'rect', { x: pos(from), y: y, width: (to - from) * 14.835 / 9.32 + '%', height: 73, fill: color });
    }
    function label(x, y, color, text) {
        add(svg, 'text', { x: x, y: y, fill: color }, text);
    }
    [[10, 0.45], [250, 0.5]].forEach(function (row) {
        bar(row[0], -48, -6, '#5ec0fe');
        bar(row[0], -6, -2, '#d6d65a');
        bar(row[0], -2, -row[1], '#ff101c');
    });
    [84, 176].forEach(function (y) {
        bar(y, -48, -20, '#22568c');
        bar(y, -20, -16, '#9a9a00');
        bar(y, -16, -5.14, '#9a0000');
        add(svg, 'line', { x1: pos(-14.5), x2: pos(-14.5), y1: y, y2: y + 73, stroke: '#2a0808' });
        label(pos(-18.2), y + 36, '#141414', '[9.4 dB]');
        label(pos(-4.9), y + 36, '#7c1214', '-5.14');
        label('89%', y + 36, '#255488', '-5.14 dB');
    });
    add(svg, 'line', { x1: pos(-0.2), x2: pos(-0.2), y1: 250, y2: 323, stroke: '#b02020' });
    label(pos(-0.2), 46, '#ec1c24', '-0.45');
    label(pos(0), 286, '#ec1c24', '-0.21');
    label('89%', 46, '#ec1c24', '-0.21 dB');
    label('89%', 286, '#ec1c24', '-0.21 dB');
    [83.5, 249.5].forEach(function (y) {
        add(svg, 'line', { x1: pos(-48), x2: pos(6), y1: y, y2: y, stroke: '#6e6e6e' });
    });
    for (var db = -45; db <= 6; db += 3) {
        [7, 157, 173, 323].forEach(function (y) {
            add(svg, 'line', { x1: pos(db), x2: pos(db), y1: y, y2: y + 3, stroke: '#a8a8a8' });
        });
        var text = (db > 0 ? '+' : '') + db + (db === 6 ? ' dB' : '');
        add(svg, 'text', { x: pos(db), y: 166, fill: '#a8a8a8', 'font-size': 11, 'text-anchor': 'middle', dx: db === 6 ? 8 : 0 }, text);
    }
    add(svg, 'text', { x: 1, y: 17, fill: '#8c8c8c', 'font-size': 11 }, 'L');
    add(svg, 'text', { x: 1, y: 257, fill: '#8c8c8c', 'font-size': 11 }, 'R');
}

// Bar and peak heights in thirds of a pixel above the base line
var bands = [36, 27, 15, 48, 69, 84, 87, 90, 111, 117, 132, 135, 186, 198, 243, 243, 261, 225, 213, 204, 192, 219, 222, 246, 294, 360, 351, 336, 321, 354, 360, 408, 387, 285, 303, 408, 267, 357, 408, 300, 306, 360, 300, 321, 282, 297, 195, 195, 87, 99, 45];
var peaks = [86, 80, 65, 98, 122, 137, 149, 152, 170, 176, 179, 194, 245, 257, 272, 272, 266, 239, 242, 260, 260, 254, 278, 287, 392, 425, 410, 377, 380, 392, 401, 0, 0, 323, 362, 0, 305, 371, 0, 338, 335, 0, 320, 344, 305, 0, 212, 0, 113];
var hues = [[0, 0], [12, 57], [15, 62], [24, 120], [31, 155], [36, 180], [38, 182], [41, 193], [43, 207], [45, 220], [47, 240], [50, 254]];

function drawSpectrum(svg) {
    function x(px) {
        return px / 9.69 + '%';
    }
    ['-12dB', '-24dB', '-36dB', '-48dB', '-60dB'].forEach(function (text, i) {
        var y = Math.round(5 + i * 28.6) + 0.5;
        add(svg, 'line', { x1: x(38), x2: x(922), y1: y, y2: y, stroke: '#363636', 'stroke-dasharray': '5 10' });
        add(svg, 'line', { x1: x(923), x2: x(969), y1: y, y2: y, stroke: '#363636' });
        add(svg, 'text', { x: 1, y: y, fill: '#909090' }, text);
    });
    bands.forEach(function (value, i) {
        var hue = interpolate(hues, i, 1);
        add(svg, 'rect', { x: x(28 + 15 * i), y: 143 - value / 3, width: x(11), height: value / 3, fill: 'hsl(' + hue + ',100%,50%)' });
        if (peaks[i]) {
            add(svg, 'rect', { x: x(28 + 15 * i), y: Math.round(142 - peaks[i] / 3), width: x(11), height: 1, fill: 'hsl(' + hue + ',85%,45%)' });
        }
    });
    ['44Hz', '86Hz', '170Hz', '340Hz', '670Hz', '1.3kHz', '2.6kHz', '5.1kHz', '10.1kHz', '20kHz'].forEach(function (text, i) {
        add(svg, 'text', { x: x(108 + 90 * i), y: 151, fill: '#909090', 'text-anchor': 'middle' }, text);
    });
    add(svg, 'text', { x: x(28), y: 151, fill: '#909090' }, svg.dataset.channel);
}

// Recorded envelopes: position, level above and level below zero (183 is full scale)
var speech = {
    start: 0, rate: 17.3,
    points: [[0,0,0],[5,5,5],[8,80,60],[14,100,90],[24,122,110],[29,90,85],[34,65,65],[40,35,35],[46,5,5],[50,0,0],[53,30,60],[55,88,60],[60,60,60],[64,80,55],[70,80,52],[76,45,45],[90,35,32],[104,22,22],[116,3,3],[118,5,5],[121,141,84],[125,10,10],[140,3,3],[144,5,10],[148,163,128],[154,30,20],[160,25,25],[170,30,15],[175,5,5],[182,5,5],[185,40,22],[195,25,15],[212,2,2],[217,60,20],[222,60,30],[227,132,102],[231,50,30],[234,10,10],[240,44,20],[250,25,15],[272,3,3],[280,10,10],[286,45,20],[292,40,30],[296,98,74],[300,20,20],[310,50,35],[315,8,8],[324,8,8],[329,98,55],[334,30,30],[337,8,8],[342,8,8],[346,105,40],[352,60,30],[362,78,40],[372,60,45],[381,150,80],[385,55,60],[388,130,80],[392,10,10],[400,45,25],[415,48,28],[430,35,20],[434,20,20],[440,58,50],[446,62,58],[455,50,40],[465,30,30],[468,55,40],[474,15,20],[477,102,55],[483,75,60],[490,183,135],[496,115,90],[505,50,40],[514,3,3],[520,100,85],[524,20,30],[528,110,60],[534,30,30],[539,110,60],[546,182,125],[552,120,75],[560,168,100],[568,85,70],[576,70,50],[582,10,20],[590,30,15],[598,90,50],[604,30,25],[614,70,45],[622,30,25],[640,28,18],[660,10,8],[667,3,3],[672,30,20],[680,50,35],[686,10,10],[696,60,40],[700,30,30],[704,85,48],[712,40,30],[716,15,10],[722,40,20],[726,15,10],[730,70,30],[736,20,15],[742,110,55],[747,30,40],[750,100,60],[753,140,95],[758,30,20],[770,15,12],[777,5,5],[781,170,126],[787,60,40],[793,20,15],[803,70,40],[809,135,78],[816,70,45],[826,35,35],[836,65,50],[843,60,50],[847,183,120],[851,75,70],[856,183,120],[860,90,90],[865,182,125],[870,90,70],[874,168,90],[879,70,60],[884,145,78],[890,80,60],[897,135,65],[905,50,40],[910,70,40],[916,20,20],[925,110,50],[933,60,55],[942,60,50],[952,20,18],[958,5,5],[964,70,45],[972,3,3],[980,95,60],[988,70,50],[994,172,100],[998,60,60],[1002,110,90],[1010,182,110],[1016,60,60],[1024,10,20],[1034,95,52],[1042,20,20],[1050,108,50],[1058,10,10],[1066,90,60],[1069,40,30],[1074,135,50],[1080,50,60],[1086,130,125],[1090,60,60],[1093,145,118],[1102,80,40],[1110,10,10],[1120,68,30],[1124,20,10],[1130,90,50],[1134,20,20],[1140,120,60],[1146,85,70],[1150,125,105],[1160,80,65],[1168,35,40],[1175,100,50],[1177,55,40],[1181,183,132],[1186,60,60],[1191,130,85],[1198,30,40],[1205,85,50],[1210,85,60],[1220,75,55],[1226,5,5],[1230,182,100],[1236,80,50],[1244,40,30],[1262,42,25],[1270,15,20],[1280,45,25],[1286,20,15],[1291,130,108],[1298,50,30],[1306,85,45],[1316,40,35],[1322,65,28],[1335,40,30],[1350,25,18],[1370,10,10],[1388,2,2],[1390,0,0]]
};
var music = {
    start: 77, rate: 22.4,
    points: [[75,0,0],[163,0,0],[167,42,32],[172,3,3],[197,3,3],[203,40,40],[207,90,100],[210,150,120],[213,181,150],[222,165,180],[228,175,170],[232,181,180],[236,181,175],[239,40,30],[243,181,100],[245,181,150],[252,181,140],[258,170,170],[266,175,160],[272,140,140],[276,20,15],[279,20,15],[284,140,100],[286,181,110],[292,120,120],[298,110,140],[303,181,165],[310,170,150],[318,170,160],[322,175,130],[330,181,160],[335,120,75],[345,110,68],[350,75,70],[358,70,65],[362,95,70],[366,20,10],[370,181,130],[378,181,150],[388,181,180],[410,181,180],[420,181,150],[425,181,175],[432,181,150],[438,181,150],[444,181,180],[470,181,180],[480,181,150],[485,181,170],[492,181,150],[500,181,165],[505,181,130],[510,181,150],[515,160,130],[520,181,150],[525,170,120],[530,170,135],[537,175,110],[540,130,85],[548,100,75],[558,85,75],[565,75,68],[572,72,80],[580,80,75],[585,130,120],[592,150,150],[597,181,180],[604,165,120],[606,181,180],[612,160,140],[617,150,170],[622,170,130],[627,150,180],[631,181,140],[634,170,170],[640,140,120],[646,130,130],[650,160,130],[655,140,160],[662,160,140],[668,181,150],[672,150,165],[680,181,170],[692,170,160],[700,170,150],[708,181,160],[715,181,160],[718,140,150],[723,120,100],[728,10,10],[733,60,25],[737,100,130],[742,170,180],[744,181,180],[750,181,160],[760,181,170],[770,181,180],[790,181,170],[800,181,180],[812,181,180],[816,170,140],[820,130,120],[825,130,110],[833,181,110],[838,20,10],[842,4,4],[850,4,4],[855,181,180],[862,181,160],[870,181,175],[885,181,150],[895,181,170],[900,181,150],[910,181,140],[917,181,110],[922,150,160],[928,150,100],[935,110,60],[937,10,10],[941,150,120],[946,175,150],[952,160,170],[960,150,140],[968,175,165],[976,150,160],[984,175,150],[988,181,170],[1000,181,165],[1010,181,170],[1028,181,160],[1036,150,130],[1045,140,110],[1055,115,85],[1062,120,80],[1065,100,90],[1067,181,180],[1070,100,80],[1078,30,50],[1083,60,55],[1087,181,180],[1100,181,165],[1110,181,170],[1114,175,130],[1119,130,60],[1123,181,130],[1132,181,170],[1138,175,150],[1142,120,100],[1152,120,65],[1158,30,15],[1165,4,4],[1172,4,12],[1178,20,10],[1182,110,100],[1186,160,140],[1190,181,180],[1205,181,180],[1217,181,150],[1222,130,60],[1226,170,90],[1232,120,70],[1240,100,65],[1248,50,65],[1255,90,90],[1262,170,120],[1266,181,180],[1280,181,165],[1290,181,180],[1300,181,160],[1308,155,110],[1316,130,95],[1322,140,70],[1328,125,90],[1332,150,80],[1337,181,170],[1340,181,120],[1346,181,140],[1352,181,160],[1362,181,180],[1368,181,150],[1371,181,160],[1372,20,20],[1374,181,150],[1382,181,130],[1390,181,155],[1398,181,135],[1406,150,130],[1413,130,120],[1416,20,20],[1422,30,30],[1432,5,5],[1440,3,3],[1450,0,0]]
};

function noise(n) {
    var v = Math.sin(n * 127.1) * 43758.5453;
    return v - Math.floor(v);
}

function sample(seconds, column) {
    if (seconds < 80.5) {
        return interpolate(speech.points, seconds * speech.rate, column, 2);
    }
    return interpolate(music.points, (seconds - music.start) * music.rate, column);
}

// Loudest moment between two pixel columns, roughened a little
function level(seconds, step, column, n) {
    var value = 0;
    for (var i = 0; i < 4; i++) {
        value = Math.max(value, sample(seconds + step * i / 4, column));
    }
    if (value >= 176) {
        return value / 183;
    }
    var rough = seconds < 80.5 ? (value > 90 ? 0.1 : 0.3) : (column === 2 ? 0.22 : 0.12);
    return value * (1 - rough * noise(n)) / 183;
}

function wavePath(o, center) {
    var top = [], bottom = [], step = 1 / o.perSecond;
    for (var x = 0; x <= 1587; x++) {
        top.push(x + ' ' + (center - o.peak * Math.pow(level(x * step, step, 1, x), o.power)).toFixed(1));
        bottom.unshift(x + ' ' + (center + o.peak * Math.pow(level(x * step, step, 2, x + 7), o.power)).toFixed(1));
    }
    return 'M' + top.join('L') + 'L' + bottom.join('L') + 'Z';
}

function drawWave(id, o) {
    var svg = document.getElementById(id);
    svg.setAttribute('viewBox', '0 0 1587 ' + o.height);
    var fill = add(add(svg, 'defs', {}), 'linearGradient', { id: id + '-bg', x2: 0, y2: 1 });
    add(fill, 'stop', { offset: 0, 'stop-color': '#3b3c3e' });
    add(fill, 'stop', { offset: 1, 'stop-color': '#2e3031' });
    o.centers.forEach(function (c, i) {
        add(svg, 'rect', { x: 0, y: i * o.height / 2, width: 1587, height: o.height / 2, fill: 'url(#' + id + '-bg)' });
        [-o.guide, o.guide].forEach(function (d) {
            add(svg, 'line', { x1: 0, x2: 1587, y1: c + d, y2: c + d, stroke: '#707274', 'stroke-dasharray': '1 3' });
        });
        add(svg, 'path', { d: wavePath(o, c), fill: '#1a88c9', stroke: '#5fb0bc', 'stroke-width': 1 });
    });
    add(svg, 'line', { x1: 0, x2: 1587, y1: o.split, y2: o.split, stroke: '#707274' });
    add(svg, 'line', { x1: o.end, x2: o.end, y1: 0, y2: o.height, stroke: '#c0607c', 'stroke-dasharray': '5 2' });
    add(svg, 'line', { x1: o.cursor, x2: o.cursor, y1: 0, y2: o.height, stroke: '#58e078', 'stroke-width': 2 });
    if (o.marker) {
        add(svg, 'path', { d: 'M' + o.marker + ' 0h5v3l-2.500 3-2.500-3z', fill: '#3ce028' });
    }
}

function timeText(s) {
    var m = Math.floor(s / 60), r = s % 60;
    return m === 0 ? r + ' s' : m + ' mn' + (r ? ' ' + r + ' s' : '');
}

function drawRuler(id, perSecond, minor, end) {
    var svg = document.getElementById(id);
    if (end) {
        add(svg, 'rect', { x: end / 15.87 + '%', y: 0, width: '100%', height: 19, fill: '#5d6164' });
    }
    for (var i = 0; i * minor * perSecond < 1587; i++) {
        var x = i * minor * perSecond / 15.87 + '%';
        var size = i % 10 === 0 ? 17 : i % 5 === 0 ? 6 : 3;
        add(svg, 'line', { x1: x, x2: x, y1: 18 - size, y2: 18, stroke: '#a2a5a6' });
        if (i % 10 === 0) {
            add(svg, 'text', { x: x, dx: 2, y: 6, fill: '#b4b6b7' }, timeText(i * minor));
        }
    }
}

function drawTicks() {
    var major = { '+6': 68, '+3': 113, '+1': 158, '0': 221, '-1': 284, '-3': 332, '-6': 380, '-12': 446, '-24': 536, '-36': 608, '-48': 668, '-72': 770 };
    var minor = [31, 190, 253, 307, 355, 415, 469, 493, 574, 640, 694, 721, 745, 811, 844];
    function y(v) {
        return Math.round(v / 3 - 8) + 0.5;
    }
    document.querySelectorAll('.marks').forEach(function (svg) {
        for (var key in major) {
            add(svg, 'text', { x: 12, y: y(major[key]) }, key);
        }
    });
    document.querySelectorAll('.ticks').forEach(function (svg) {
        var start = { left: 0, center: 2, right: 4 }[svg.dataset.side];
        for (var key in major) {
            add(svg, 'line', { x1: 0, x2: 8, y1: y(major[key]), y2: y(major[key]) });
        }
        minor.forEach(function (v) {
            add(svg, 'line', { x1: start, x2: start + 4, y1: y(v), y2: y(v) });
        });
    });
}

drawLevels();
document.querySelectorAll('.spectro-plot').forEach(drawSpectrum);
drawRuler('overview-ruler', 10.38, 1);
drawRuler('detail-ruler', 7.713, 2, 1123);
drawWave('overview-wave', { height: 42, centers: [10.5, 30.5], split: 20.5, guide: 3, peak: 4.5, power: 1.3, perSecond: 10.38, cursor: 1012, end: 1511 });
drawWave('detail-wave', { height: 271, centers: [68, 202], split: 134.5, guide: 31, peak: 61, power: 1, perSecond: 7.713, cursor: 753, end: 1123.5, marker: 734 });
drawTicks();
```
